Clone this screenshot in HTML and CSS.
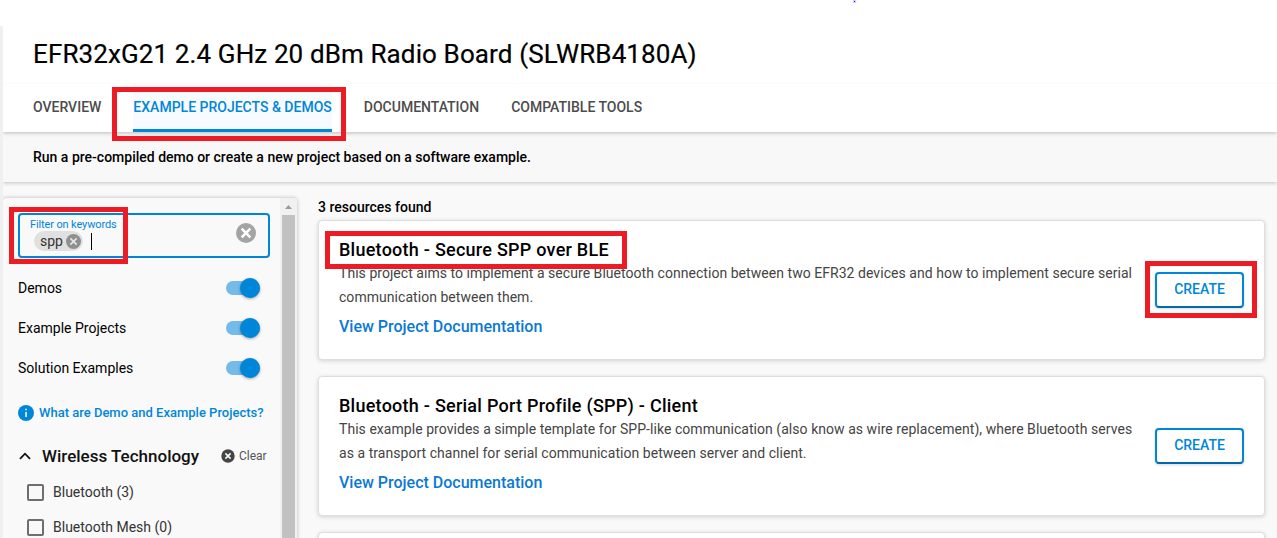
FILE: index.html
```html
<!DOCTYPE html>
<html lang="en">
<head>
<meta charset="utf-8">
<title>EFR32xG21 Radio Board</title>
<link rel="stylesheet" href="styles.css">
</head>
<body>
<div class="app">
  <header class="header"><h1 class="title">EFR32xG21 2.4 GHz 20 dBm Radio Board (SLWRB4180A)</h1></header>
  <nav class="tabs">
    <a class="tab">OVERVIEW</a>
    <a class="tab tab-active">EXAMPLE PROJECTS &amp; DEMOS</a>
    <a class="tab tab-docs">DOCUMENTATION</a>
    <a class="tab tab-tools">COMPATIBLE TOOLS</a>
  </nav>
  <div class="intro"><span>Run a pre-compiled demo or create a new project based on a software example.</span></div>
  <div class="content">
    <aside class="sidebar">
      <div class="filters">
        <div class="field">
          <div class="field-body">
            <div class="field-label">Filter on keywords</div>
            <div class="field-value">
              <span class="chip"><span class="chip-text">spp</span>
                <svg class="chip-x" width="15" height="15" viewBox="0 0 20 20"><circle cx="10" cy="10" r="10" fill="#8f8f8f"/><path d="M5.8 5.8l8.4 8.4M14.2 5.8l-8.4 8.4" stroke="#e6e6e6" stroke-width="2.2"/></svg>
              </span>
              <span class="caret"></span>
            </div>
          </div>
          <svg class="field-x" width="20" height="20" viewBox="0 0 20 20"><circle cx="10" cy="10" r="10" fill="#a4a4a4"/><path d="M5.7 5.7l8.6 8.6M14.3 5.7l-8.6 8.6" stroke="#fff" stroke-width="2.6"/></svg>
        </div>
        <div class="toggle-row"><span class="t-demos">Demos</span><span class="toggle"><span class="knob"></span></span></div>
        <div class="toggle-row"><span class="t-example">Example Projects</span><span class="toggle"><span class="knob"></span></span></div>
        <div class="toggle-row"><span class="t-solution">Solution Examples</span><span class="toggle"><span class="knob"></span></span></div>
        <div class="help">
          <svg width="16" height="16" viewBox="0 0 16 16"><circle cx="8" cy="8" r="8" fill="#0086d9"/><path d="M7.3 3.8h1.5v1.5H7.3zM7.3 6.9h1.5v5H7.3z" fill="#fff"/></svg>
          <span class="help-text">What are Demo and Example Projects?</span>
        </div>
        <div class="group">
          <svg class="chevron" width="12" height="8" viewBox="0 0 12 8"><path d="M1 6.8L6 1.7l5 5.1" fill="none" stroke="#111" stroke-width="1.8"/></svg>
          <span class="group-name">Wireless Technology</span>
          <span class="clear">
            <svg width="14" height="14" viewBox="0 0 14 14"><circle cx="7" cy="7" r="6.7" fill="#444"/><path d="M4.4 4.4l5.2 5.2M9.6 4.4L4.4 9.6" stroke="#f8f8f8" stroke-width="1.6"/></svg>
            <span class="clear-text">Clear</span>
          </span>
        </div>
        <div class="check"><span class="box"></span><span class="check-label">Bluetooth (3)</span></div>
        <div class="check"><span class="box"></span><span class="check-label">Bluetooth Mesh (0)</span></div>
      </div>
      <div class="scrollbar">
        <svg width="17" height="17" viewBox="0 0 17 17"><path d="M5 11l3.5-4 3.5 4z" fill="#9b9b9b"/></svg>
        <div class="thumb"></div>
      </div>
    </aside>
    <main class="results">
      <div class="count"><span>3 resources found</span></div>
      <section class="card">
        <div class="card-text">
          <h2 class="card-title"><span>Bluetooth - Secure SPP over BLE</span></h2>
          <p class="desc"><span>This project aims to implement a secure Bluetooth connection between two EFR32 devices and how to implement secure serial</span><br><span>communication between them.</span></p>
          <a class="link">View Project Documentation</a>
        </div>
        <button class="create">CREATE</button>
      </section>
      <section class="card">
        <div class="card-text">
          <h2 class="card-title"><span>Bluetooth - Serial Port Profile (SPP) - Client</span></h2>
          <p class="desc"><span>This example provides a simple template for SPP-like communication (also know as wire replacement), where Bluetooth serves</span><br><span>as a transport channel for serial communication between server and client.</span></p>
          <a class="link">View Project Documentation</a>
        </div>
        <button class="create">CREATE</button>
      </section>
      <section class="card"></section>
    </main>
  </div>
</div>
<div class="mark mark-tab"></div>
<div class="mark mark-filter"></div>
<div class="mark mark-title"></div>
<div class="mark mark-create"></div>
<div class="dot"></div>
</body>
</html>
```
FILE: styles.css
```css
* { box-sizing: border-box; }
body {
  margin: 0;
  width: 1277px;
  height: 538px;
  overflow: hidden;
  padding-top: 26px;
  background: #fff;
  position: relative;
  font-family: Roboto, "Liberation Sans", sans-serif;
  font-size: 14px;
  color: #000;
  white-space: nowrap;
}
.app { height: 512px; border-left: 3px solid #f0f0f0; background: #f9f9f9; display: flex; flex-direction: column; overflow: hidden; }
.header { flex: none; height: 57px; padding-left: 30px; background: #fff; position: relative; z-index: 3; }
.title { margin: 0; font-size: 26px; font-weight: 400; line-height: 56px; letter-spacing: 0.115px; -webkit-text-stroke: 0.2px #000; }
.tabs { flex: none; height: 49px; padding-left: 30px; display: flex; gap: 32px; background: #fff; border-top: 1px solid #fbfbfb; box-shadow: 0 1px 4px rgba(0,0,0,.25); position: relative; z-index: 2; }
.tab { line-height: 47px; font-weight: 500; color: #4c4c4c; }
.tab-active { color: #0086d9; background: #f7fbff; border-bottom: 3px solid #0086d9; }
.intro { flex: none; height: 50px; padding-left: 30px; line-height: 50px; font-weight: 500; background: #f8f8f8; box-shadow: 0 1px 4px rgba(0,0,0,.22); position: relative; z-index: 1; }
.content { flex: 1; display: flex; gap: 21px; padding-top: 15px; min-height: 0; }
.sidebar { width: 294px; height: 360px; display: flex; border-top: 1px solid #dedede; border-radius: 4px 4px 0 0; box-shadow: 0 1px 4px rgba(0,0,0,.25); background: #f9f9f9; overflow: hidden; }
.filters { width: 277px; padding: 15px 0 0 15px; }
.field { width: 252px; height: 45px; border: 2px solid #0086d9; border-radius: 4px; display: flex; justify-content: space-between; padding: 0 12px 0 10px; }
.field-label { font-size: 11px; line-height: 12px; margin-top: 4px; letter-spacing: -0.13px; color: #0086d9; }
.field-value { display: flex; align-items: center; padding-left: 4px; gap: 8px; }
.chip { display: flex; align-items: center; width: 49px; height: 20px; border-radius: 10px; background: #e0e0e0; padding-left: 6px; color: #333; }
.chip-text { width: 26px; line-height: 20px; }
.caret { width: 1px; height: 17px; background: #000; }
.field-x { margin-top: 8px; }
.toggle-row { height: 40px; width: 242px; display: flex; justify-content: space-between; align-items: center; }
.field + .toggle-row { margin-top: 10px; }
.toggle { width: 34px; height: 14px; border-radius: 7px; background: #74bbea; display: flex; align-items: center; justify-content: flex-end; }
.knob { width: 20px; height: 20px; flex: none; border-radius: 50%; background: #0086d9; box-shadow: 0 1px 3px rgba(0,0,0,.35); }
.help { display: flex; align-items: center; gap: 5px; height: 16px; margin-top: 17px; color: #0086d9; font-weight: 500; font-size: 13px; }
.help-text { padding-bottom: 2px; }
.group { display: flex; align-items: center; height: 24px; margin-top: 23px; padding-left: 1px; }
.group-name { font-size: 17px; font-weight: 500; margin-left: 11px; width: 179px; color: #111; }
.clear { display: flex; align-items: center; gap: 4px; font-size: 12px; color: #555; }
.check { display: flex; align-items: center; height: 35px; padding-left: 9px; gap: 9px; color: #333; }
.check-label { padding-bottom: 2px; }
.group + .check { margin-top: 7px; }
.box { width: 17px; height: 17px; border: 2px solid #6e6e6e; border-radius: 2px; }
.scrollbar { width: 17px; background: #f1f1f1; display: flex; flex-direction: column; align-items: center; }
.scrollbar svg { flex: none; }
.thumb { width: 13px; flex: 1; background: #c1c1c1; }
.results { width: 947px; }
.count { height: 23px; line-height: 20px; font-weight: 500; }
.card { height: 140px; margin-bottom: 16px; background: #fff; border: 1px solid #dedede; border-radius: 4px; box-shadow: 0 1px 4px rgba(0,0,0,.16); padding: 18px 20px 0; display: flex; justify-content: space-between; }
.card-text { width: 800px; }
.card-title { margin: 0; font-size: 18px; font-weight: 500; line-height: 22px; letter-spacing: 0.25px; }
.desc { margin: 0; line-height: 24px; letter-spacing: 0.045px; color: #444; }
.link { display: block; margin-top: 3px; font-size: 16px; line-height: 30px; font-weight: 500; color: #0a79d3; }
.create { width: 89px; height: 36px; margin: 33px 0 0; padding: 0 0 2px; border: 2px solid #0086d9; border-bottom-color: #0068ab; border-radius: 4px; background: #fff; font: 500 14px Roboto, sans-serif; color: #0086d9; box-shadow: 0 1px 3px rgba(0,0,0,.15); }
.mark { position: absolute; z-index: 5; border: 5px solid #ed1c24; }
.mark-tab { left: 112px; top: 87px; width: 234px; height: 54px; }
.mark-filter { left: 9px; top: 207px; width: 119px; height: 57px; }
.mark-title { left: 325px; top: 231px; width: 302px; height: 38px; }
.mark-create { left: 1145px; top: 261px; width: 112px; height: 57px; }
.dot { position: absolute; left: 854px; top: 1px; width: 1px; height: 1px; background: #00f; box-shadow: 0 0 1px 1px rgba(0,0,255,.2); }
```
